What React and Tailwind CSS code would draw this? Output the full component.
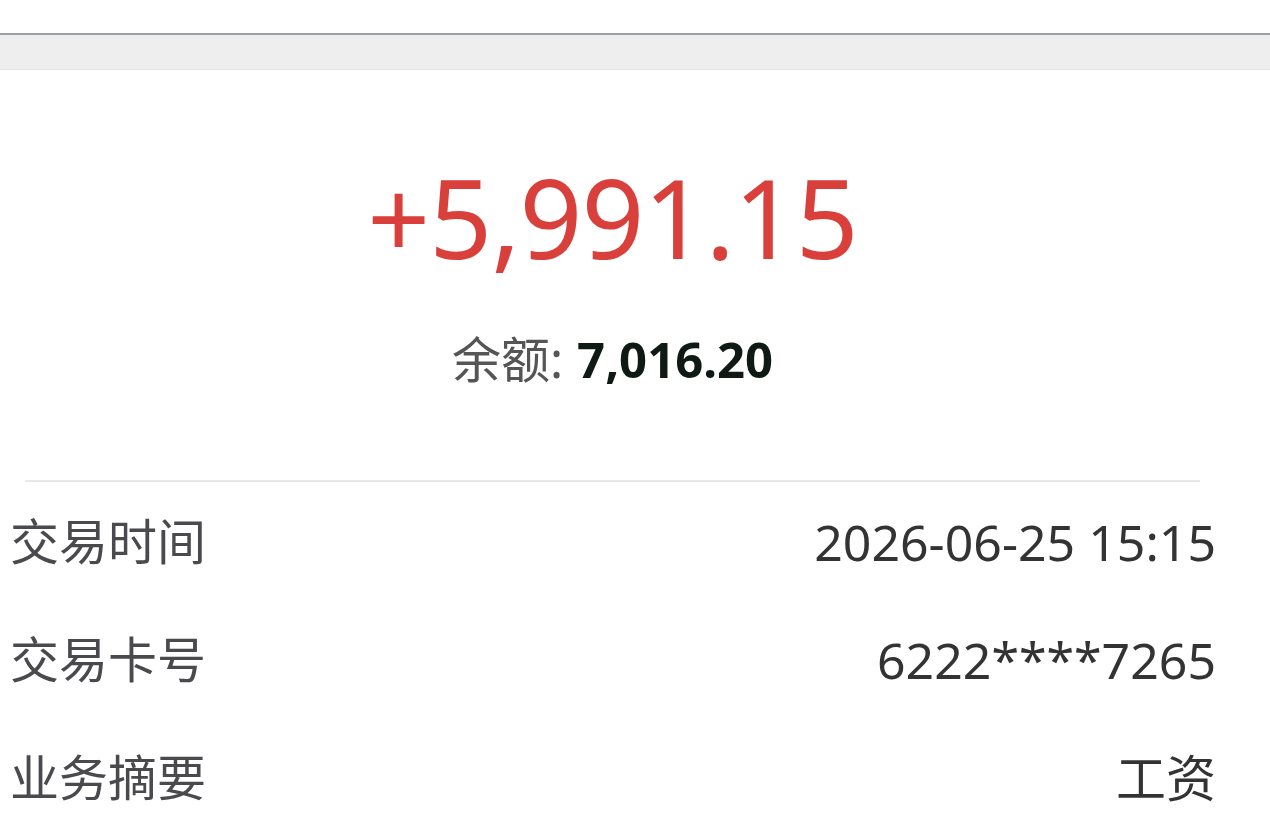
export default function App() {
  const rows = [
    { label: '交易时间', value: '2026-06-25 15:15' },
    { label: '交易卡号', value: '6222****7265' },
    { label: '业务摘要', value: '工资' },
  ];

  return (
    <div
      className="w-[1270px] h-[828px] overflow-hidden bg-white"
      style={{ fontFamily: '"Noto Sans", "Noto Sans CJK SC", sans-serif' }}
    >
      {/* top bar */}
      <div className="h-[33px] bg-white" />
      <div className="h-[2px] bg-[#9ba3a8]" />
      <div className="h-[35px] bg-[#eeeeee] border-b border-[#e4e4e4]" />

      {/* amount */}
      <div className="w-[1225px] flex flex-col items-center pt-[83px]">
        <div className="text-[110px] leading-[126px] font-normal text-[#d9403b] tracking-[-1px]">
          +5,991.15
        </div>
        <div className="mt-[51px] flex items-baseline text-[49px] leading-[58px]">
          <span className="text-[#555555]">余额:</span>
          <span className="ml-[14px] font-bold text-[#0f1a14]">7,016.20</span>
        </div>
      </div>

      <div className="mt-[92px] ml-[25px] w-[1175px] h-[2px] bg-[#e8e8e8]" />

      <div className="flex flex-col pl-[10px] pr-[54px] pt-[34px] gap-[66px]">
        {rows.map((r) => (
          <div key={r.label} className="flex justify-between items-center h-[52px]">
            <span className="text-[49px] text-[#4a4a4e]">{r.label}</span>
            <span className="text-[50px] text-[#333333]">{r.value}</span>
          </div>
        ))}
      </div>
    </div>
  );
}
